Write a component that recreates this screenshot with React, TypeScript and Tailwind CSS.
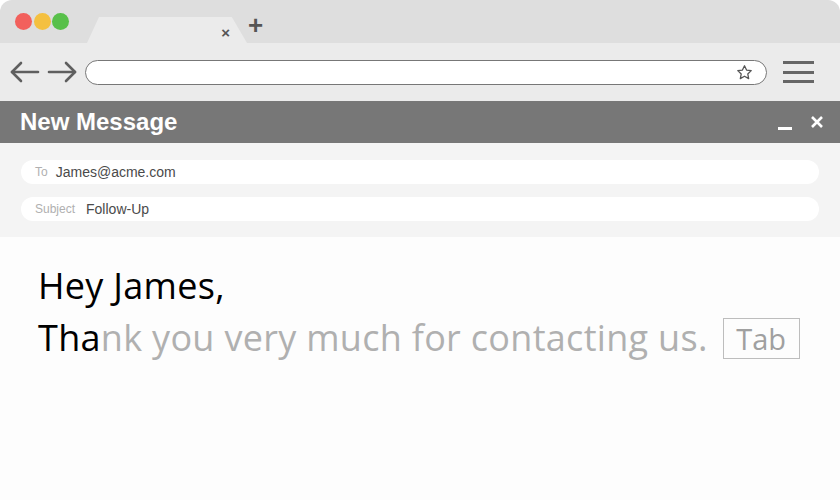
import React from 'react';

const Arrow: React.FC<{ dir: 'left' | 'right' }> = ({ dir }) => (
  <svg width="30" height="22" viewBox="0 0 30 22" fill="none" stroke="#5f5f5f" strokeWidth="2.6" strokeLinecap="round" strokeLinejoin="round">
    {dir === 'left' ? (
      <>
        <path d="M2 11h26" />
        <path d="M11 2 2 11l9 9" />
      </>
    ) : (
      <>
        <path d="M2 11h26" />
        <path d="M19 2l9 9-9 9" />
      </>
    )}
  </svg>
);

const Star = () => (
  <svg width="17" height="17" viewBox="0 0 24 24" fill="none" stroke="#555" strokeWidth="1.8" strokeLinejoin="round">
    <path d="M12 2.5l2.9 6.1 6.6.8-4.9 4.6 1.3 6.6L12 17.3l-5.9 3.3 1.3-6.6-4.9-4.6 6.6-.8z" />
  </svg>
);

const Field: React.FC<{ label: string; value: string; wide?: boolean }> = ({ label, value, wide }) => (
  <div className="flex items-center h-6 bg-white rounded-full pl-[14px]">
    <span className="text-[12px] text-[#b0b0b0]">{label}</span>
    <span className={wide ? 'ml-[11px] text-[14px] text-[#4a4a4a]' : 'ml-[8px] text-[14px] text-[#4a4a4a]'}>{value}</span>
  </div>
);

export default function App() {
  return (
    <div className="w-[840px] h-[500px] bg-white font-['Liberation_Sans',Arial,sans-serif]">
      <div className="flex flex-col h-full rounded-t-[12px] overflow-hidden">
        {/* tab strip */}
        <div className="flex items-end h-[43px] bg-[#dedede] pl-[15px]">
          <div className="flex items-center gap-[1.5px] self-center">
            <span className="w-[17px] h-[17px] rounded-full bg-[#f2605c]" />
            <span className="w-[17px] h-[17px] rounded-full bg-[#f4c040]" />
            <span className="w-[17px] h-[17px] rounded-full bg-[#58c04a]" />
          </div>
          <div className="ml-[18px] w-[160px] h-[26px] bg-[#ebebeb] [clip-path:polygon(7.5%_0,90.5%_0,100%_100%,0_100%)] flex items-center justify-end pr-[17px] pt-[4px]">
            <span className="text-[15px] leading-none text-[#555] font-bold">×</span>
          </div>
          <span className="ml-[1px] mb-[5px] text-[26px] leading-none text-[#555] font-bold">+</span>
        </div>

        {/* toolbar */}
        <div className="flex items-center h-[58px] bg-[#ebebeb] pl-[10px] pr-[26px]">
          <Arrow dir="left" />
          <div className="ml-[7px]"><Arrow dir="right" /></div>
          <div className="ml-[8px] flex-1 h-[25px] bg-white border-[1.5px] border-[#777] rounded-full flex items-center justify-end pr-[13px]">
            <Star />
          </div>
          <div className="ml-[16px] flex flex-col gap-[6.5px]">
            <span className="block w-[31px] h-[3px] bg-[#666]" />
            <span className="block w-[31px] h-[3px] bg-[#666]" />
            <span className="block w-[31px] h-[3px] bg-[#666]" />
          </div>
        </div>

        {/* header */}
        <div className="flex items-center h-[42px] bg-[#777777] pl-[20px] pr-[17px]">
          <span className="text-[24px] font-bold text-white">New Message</span>
          <div className="ml-auto flex items-center gap-[19px]">
            <span className="block w-[14px] h-[3px] bg-white mt-[12px]" />
            <svg width="12" height="12" viewBox="0 0 12 12" stroke="white" strokeWidth="2.6">
              <path d="M1 1l10 10M11 1 1 11" />
            </svg>
          </div>
        </div>

        {/* fields */}
        <div className="flex flex-col gap-[13px] bg-[#f4f4f4] px-[21px] pt-[17px] pb-[16px]">
          <Field label="To" value="James@acme.com" />
          <Field label="Subject" value="Follow-Up" wide />
        </div>

        {/* body */}
        <div className="flex-1 bg-[#fdfdfd] pl-[38px] pt-[23px] font-['Open_Sans',sans-serif] text-[36px] leading-[52px] tracking-[0.3px]">
          <div className="text-black">Hey James,</div>
          <div className="flex items-center">
            <span className="text-black">Tha</span>
            <span className="text-[#b0b0b0]">nk you very much for contacting us.</span>
            <span className="ml-[15px] h-[41px] w-[77px] border border-[#bdbdbd] flex items-center justify-center text-[29px] text-[#a0a0a0] leading-none tracking-normal">Tab</span>
          </div>
        </div>
      </div>
    </div>
  );
}
